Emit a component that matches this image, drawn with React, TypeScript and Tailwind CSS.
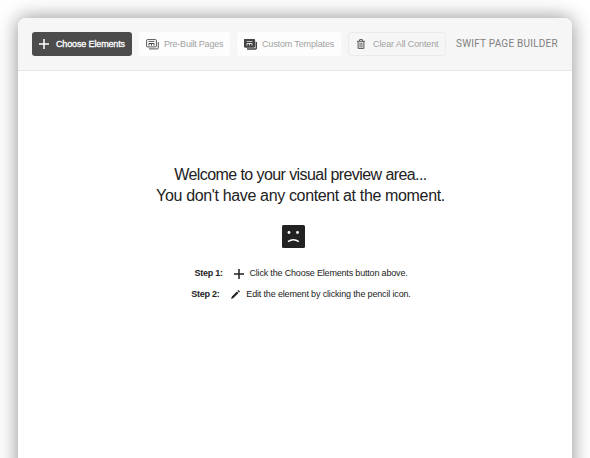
import type { ReactNode } from "react";

const sans = "font-['Liberation_Sans',Arial,sans-serif]";

function Plus({ size, width, className = "" }: { size: number; width: number; className?: string }) {
  return (
    <svg width={size} height={size} viewBox="0 0 10 10" className={`shrink-0 ${className}`} stroke="currentColor" strokeWidth={width}>
      <path d="M5 0v10M0 5h10" />
    </svg>
  );
}

function Pages({ solid = false }: { solid?: boolean }) {
  return (
    <svg width="13" height="11" viewBox="0 0 13 11" className="shrink-0" fill="none" stroke="#444" strokeWidth={solid ? 1.5 : 0.9}>
      <path d="M3 9.9h8.4q.9 0 .9-.9V3" />
      <rect x="0.6" y="0.6" width="9.8" height="7.3" rx="0.8" fill={solid ? "#444" : "none"} />
      <path d="M2.6 2.5h5.8" stroke={solid ? "#ddd" : "#444"} strokeWidth="0.8" />
      <path d="M3 6.5V4.5h5v2M5.5 4.5v2" stroke={solid ? "#ddd" : "#444"} strokeWidth="1" />
    </svg>
  );
}

function Trash() {
  return (
    <svg width="8" height="10" viewBox="0 0 8 10" className="shrink-0" fill="none" stroke="#555" strokeWidth="1">
      <path d="M0 2.3h8M2.6 2V.6h2.8V2M1.1 2.5v6.9h5.8V2.5" />
      <path d="M2.9 3.6v4.8M4 3.6v4.8M5.1 3.6v4.8" strokeWidth="0.7" />
    </svg>
  );
}

function Button({ className, children }: { className: string; children: ReactNode }) {
  return <button className={`flex h-6 shrink-0 items-center whitespace-nowrap rounded-[3px] text-[9px] leading-none ${className}`}>{children}</button>;
}

export default function App() {
  return (
    <div className={`h-[458px] w-[590px] overflow-hidden bg-white px-[18px] pt-[18px] ${sans}`}>
      <main className="h-[480px] w-[554px] rounded-t-[8px] bg-white shadow-[0_0_20px_rgba(0,0,0,0.45)]">
        <header className="flex h-[53px] items-center rounded-t-[8px] border-b border-[#e6e6e6] bg-[#f6f6f6] pl-[14px]">
          <Button className="w-[100px] bg-[#4c4c4c] pl-[7px] text-white">
            <Plus size={10} width={1.5} />
            <span className="ml-[7px] tracking-[-0.14px] [-webkit-text-stroke:0.3px_white]">Choose Elements</span>
          </Button>
          <Button className="ml-[7px] w-[91px] bg-[#fdfdfd] pl-[7px] text-[#a2a2a2]">
            <Pages />
            <span className="ml-[5px] tracking-[-0.22px]">Pre-Built Pages</span>
          </Button>
          <Button className="ml-[7px] w-[104px] bg-[#fdfdfd] pl-[7px] text-[#a2a2a2]">
            <Pages solid />
            <span className="ml-[5px] tracking-[-0.14px]">Custom Templates</span>
          </Button>
          <Button className="ml-[7px] w-[98px] border border-[#ebebeb] pl-2 text-[#a2a2a2]">
            <Trash />
            <span className="ml-2 tracking-[-0.12px]">Clear All Content</span>
          </Button>
          <span className="ml-[10px] mt-[-1px] whitespace-nowrap font-[Roboto,sans-serif] text-[10px] leading-none tracking-[0.23px] text-[#808080]">SWIFT PAGE BUILDER</span>
        </header>
        <section className="flex flex-col items-center pl-[11px] pt-[93px] text-[#222]">
          <h1 className="whitespace-nowrap text-center text-[16px] leading-[21px]">
            <span className="tracking-[-0.58px]">Welcome to your visual preview area...</span>
            <br />
            <span className="tracking-[-0.35px]">You don't have any content at the moment.</span>
          </h1>
          <svg width="23" height="23" viewBox="0 0 23 23" className="mr-[14px] mt-[19px]">
            <rect width="23" height="23" rx="1.5" fill="#222" />
            <circle cx="7" cy="7.5" r="1.4" fill="#fff" />
            <circle cx="15.5" cy="7.5" r="1.4" fill="#fff" />
            <path d="M6 16.6q5.3-3.7 10.8 0" fill="none" stroke="#fff" strokeWidth="1.4" />
          </svg>
          <div className="mt-[15px] flex h-[21px] items-center whitespace-nowrap pl-px text-[9px]">
            <b className="w-[28px] tracking-[-0.25px]">Step 1:</b>
            <Plus size={10} width={1.5} className="ml-[12px]" />
            <span className="ml-[5px] tracking-[-0.18px]">Click the Choose Elements button above.</span>
          </div>
          <div className="flex h-[21px] items-center whitespace-nowrap pl-px text-[9px]">
            <b className="w-[28px] tracking-[-0.25px]">Step 2:</b>
            <svg width="9" height="9" viewBox="0 0 9 9" className="ml-[12px]" fill="#222">
              <path d="M0 9 .9 6.6 6 1.4 7.5 2.9 2.4 8zM6.5.9 7.4 0 9 1.5 8.1 2.4z" />
            </svg>
            <span className="ml-[6px] tracking-[-0.16px]">Edit the element by clicking the pencil icon.</span>
          </div>
        </section>
      </main>
    </div>
  );
}
